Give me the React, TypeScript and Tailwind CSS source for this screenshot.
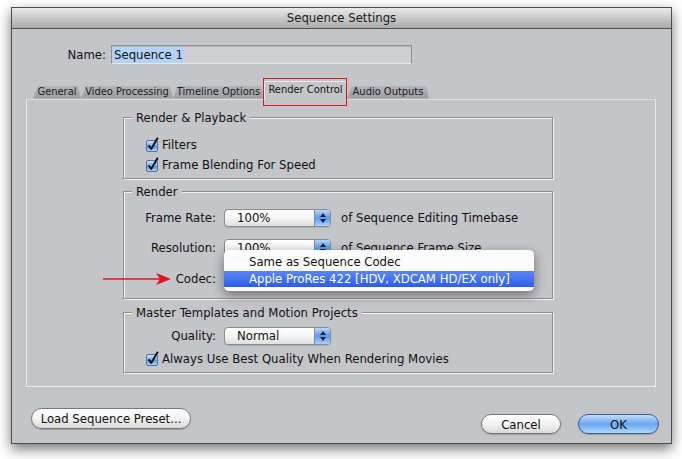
import React from "react";

const TABS = [
  { label: "General", w: "w-[48px]" },
  { label: "Video Processing", w: "w-[92px]" },
  { label: "Timeline Options", w: "w-[91px]" },
  { label: "Render Control", w: "w-[83px]", active: true },
  { label: "Audio Outputs", w: "w-[82px]" },
];

const PANEL = "bg-[#c4c5c9]";

function Checkbox() {
  return (
    <svg width="13" height="15" viewBox="0 0 13 15" className="shrink-0 overflow-visible">
      <defs>
        <linearGradient id="cbg" x1="0" y1="0" x2="0" y2="1">
          <stop offset="0" stopColor="#d2e6fd" />
          <stop offset="0.45" stopColor="#7db2f1" />
          <stop offset="0.55" stopColor="#5b9aec" />
          <stop offset="1" stopColor="#b4dafd" />
        </linearGradient>
      </defs>
      <rect x="0.5" y="3.5" width="11" height="11" rx="1.5" fill="url(#cbg)" stroke="#56719b" />
      <path d="M2.6 8.4 L5.2 12 L11.8 0.8" stroke="#111" strokeWidth="2" fill="none" strokeLinejoin="round" />
    </svg>
  );
}

function Popup({ value }: { value: string }) {
  return (
    <div className="flex h-[18px] w-[107px] items-center rounded-[4px] border border-[#8c8c8c] bg-gradient-to-b from-white via-[#f6f6f6] to-[#dedede] shadow-[0_1px_1px_rgba(0,0,0,0.12)]">
      <span className="pl-[12px] text-[13px] leading-none text-[#111]">{value}</span>
      <span className="ml-auto flex h-full w-[16px] flex-col items-center justify-center gap-[2px] rounded-r-[3px] border-l border-[#7c8fae] bg-gradient-to-b from-[#b9d5fa] via-[#5f98ea] to-[#a9d2fc]">
        <svg width="6" height="4" viewBox="0 0 6 4">
          <path d="M0 4 L3 0 L6 4 Z" fill="#12233f" />
        </svg>
        <svg width="6" height="4" viewBox="0 0 6 4">
          <path d="M0 0 L3 4 L6 0 Z" fill="#12233f" />
        </svg>
      </span>
    </div>
  );
}

function Group({ title, className, children }: { title: string; className?: string; children: React.ReactNode }) {
  return (
    <fieldset
      className={`w-[430px] border border-[#8e8e8e] shadow-[1px_1px_0_#f2f2f2,inset_1px_1px_0_#f2f2f2] ${className ?? ""}`}
    >
      <legend className={`ml-[8px] px-[4px] text-[13px] leading-[16px] text-[#111] ${PANEL}`}>{title}</legend>
      {children}
    </fieldset>
  );
}

function Row({ label, children, extra }: { label: string; children: React.ReactNode; extra?: React.ReactNode }) {
  return (
    <div className="relative flex h-[18px] items-center text-[13px] text-[#111]">
      <span className="w-[93px] pr-[1px] text-right">{label}</span>
      <div className="ml-[7px]">{children}</div>
      {extra}
    </div>
  );
}

function CheckRow({ label }: { label: string }) {
  return (
    <div className="flex h-[16px] items-center gap-[3px] pl-[22px] text-[13px] leading-[16px] text-[#111]">
      <Checkbox />
      <span>{label}</span>
    </div>
  );
}

export default function App() {
  return (
    <div className="h-[459px] w-[682px] whitespace-nowrap bg-white pl-[11px] pt-[7px] font-['DejaVu_Sans_Condensed','DejaVu_Sans',sans-serif]">
      <div className={`flex h-[437px] w-[661px] flex-col border border-[#4d4d4d] ${PANEL} shadow-[0_5px_12px_rgba(0,0,0,0.55)]`}>
        {/* Title bar */}
        <div className="flex h-[21px] shrink-0 items-center justify-center border-b border-[#4f4f4f] bg-gradient-to-b from-[#e9e9e9] to-[#ababab] text-[13px] text-[#1a1a1a]">
          Sequence Settings
        </div>

        {/* Name */}
        <div className="mt-[16px] flex items-center text-[13px] text-[#111]">
          <span className="w-[94px] text-right">Name:</span>
          <div className="ml-[5px] flex h-[19px] w-[301px] items-center border border-[#8f8f8f] border-b-[#e6e6e6] bg-[#cfd0d4] pl-[1px] shadow-[inset_0_1px_1px_rgba(0,0,0,0.12)]">
            <span className="bg-[#b4d3fc] px-[1px] leading-[16px]">Sequence 1</span>
          </div>
        </div>

        {/* Tabs */}
        <div className="ml-[21px] mt-[16px] flex h-[18px] items-end">
          {TABS.map((t) =>
            t.active ? (
              <div
                key={t.label}
                className={`relative z-10 -mb-[1px] flex h-[19px] ${t.w} items-center justify-center rounded-t-[3px] border-x border-t border-[#e9e9e9] ${PANEL} text-[11px] text-[#111]`}
              >
                {t.label}
                <span className="pointer-events-none absolute -bottom-[6px] -left-[2px] -right-[1px] -top-[4px] border border-[#e3141f]" />
              </div>
            ) : (
              <div
                key={t.label}
                className={`flex h-[13px] ${t.w} items-center justify-center bg-gradient-to-b from-[#b4b5ba] to-[#9c9da2] text-[11px] text-[#1b1b1b] [clip-path:polygon(0_100%,5px_0,calc(100%_-_3px)_0,100%_100%)]`}
              >
                <span className="pt-[1px]">{t.label}</span>
              </div>
            )
          )}
        </div>

        {/* Panel */}
        <div className={`ml-[14px] flex h-[288px] w-[630px] flex-col border border-[#ececec] border-t-[#dcdcdc] pl-[96px] pt-[10px] ${PANEL}`}>
          <Group title="Render & Playback" className="pb-[5px]">
            <div className="mt-[11px] flex flex-col gap-[4px]">
              <CheckRow label="Filters" />
              <CheckRow label="Frame Blending For Speed" />
            </div>
          </Group>

          <Group title="Render" className="mt-[5px] pb-[10px]">
            <div className="mt-[9px] flex flex-col gap-[12px]">
              <Row
                label="Frame Rate:"
                extra={<span className="ml-[10px]">of Sequence Editing Timebase</span>}
              >
                <Popup value="100%" />
              </Row>
              <Row
                label="Resolution:"
                extra={<span className="ml-[10px]">of Sequence Frame Size</span>}
              >
                <Popup value="100%" />
              </Row>
              <div className="relative mt-[1px]">
                {/* red annotation arrow */}
                <svg
                  width="70"
                  height="14"
                  viewBox="0 0 70 14"
                  className="absolute left-[-21px] top-[2px] z-20"
                >
                  <path d="M0 7 H60" stroke="#e3141f" strokeWidth="1.6" />
                  <path d="M53 1 L68 7 L53 13 L57 7 Z" fill="#e3141f" />
                </svg>
                <Row label="Codec:">
                  <div className="relative h-[18px] w-[107px]">
                    <div className="absolute left-0 top-[-20px] z-30 w-[310px] rounded-[5px] bg-white/95 pb-[4px] pt-[4px] shadow-[0_4px_12px_rgba(0,0,0,0.45)]">
                      <div className="flex h-[16px] items-center pl-[25px] text-[13px] text-[#111]">Same as Sequence Codec</div>
                      <div className="mt-[1px] flex h-[16px] items-center bg-gradient-to-b from-[#5b86f2] to-[#2c5ced] pl-[25px] text-[13px] text-white">
                        Apple ProRes 422 [HDV, XDCAM HD/EX only]
                      </div>
                    </div>
                  </div>
                </Row>
              </div>
            </div>
          </Group>

          <Group title="Master Templates and Motion Projects" className="mt-[6px] pb-[5px]">
            <div className="mt-[6px] flex flex-col gap-[6px]">
              <Row label="Quality:">
                <Popup value="Normal" />
              </Row>
              <CheckRow label="Always Use Best Quality When Rendering Movies" />
            </div>
          </Group>
        </div>

        {/* Buttons */}
        <div className="mt-[21px] flex items-start justify-between pl-[19px] pr-[12px] text-[13px] text-[#111]">
          <button className="h-[21px] w-[160px] rounded-full border border-[#777] bg-gradient-to-b from-white via-[#f3f3f3] to-[#d9d9d9] shadow-[0_1px_1px_rgba(0,0,0,0.2)]">
            Load Sequence Preset...
          </button>
          <div className="mt-[6px] flex gap-[17px]">
            <button className="h-[20px] w-[80px] rounded-full border border-[#777] bg-gradient-to-b from-white via-[#f3f3f3] to-[#d9d9d9] shadow-[0_1px_1px_rgba(0,0,0,0.2)]">
              Cancel
            </button>
            <button className="h-[20px] w-[81px] rounded-full border border-[#3d5c95] bg-gradient-to-b from-[#c4defd] via-[#6aa6f0] to-[#aedafe] shadow-[0_1px_1px_rgba(0,0,0,0.2)]">
              OK
            </button>
          </div>
        </div>
      </div>
    </div>
  );
}
